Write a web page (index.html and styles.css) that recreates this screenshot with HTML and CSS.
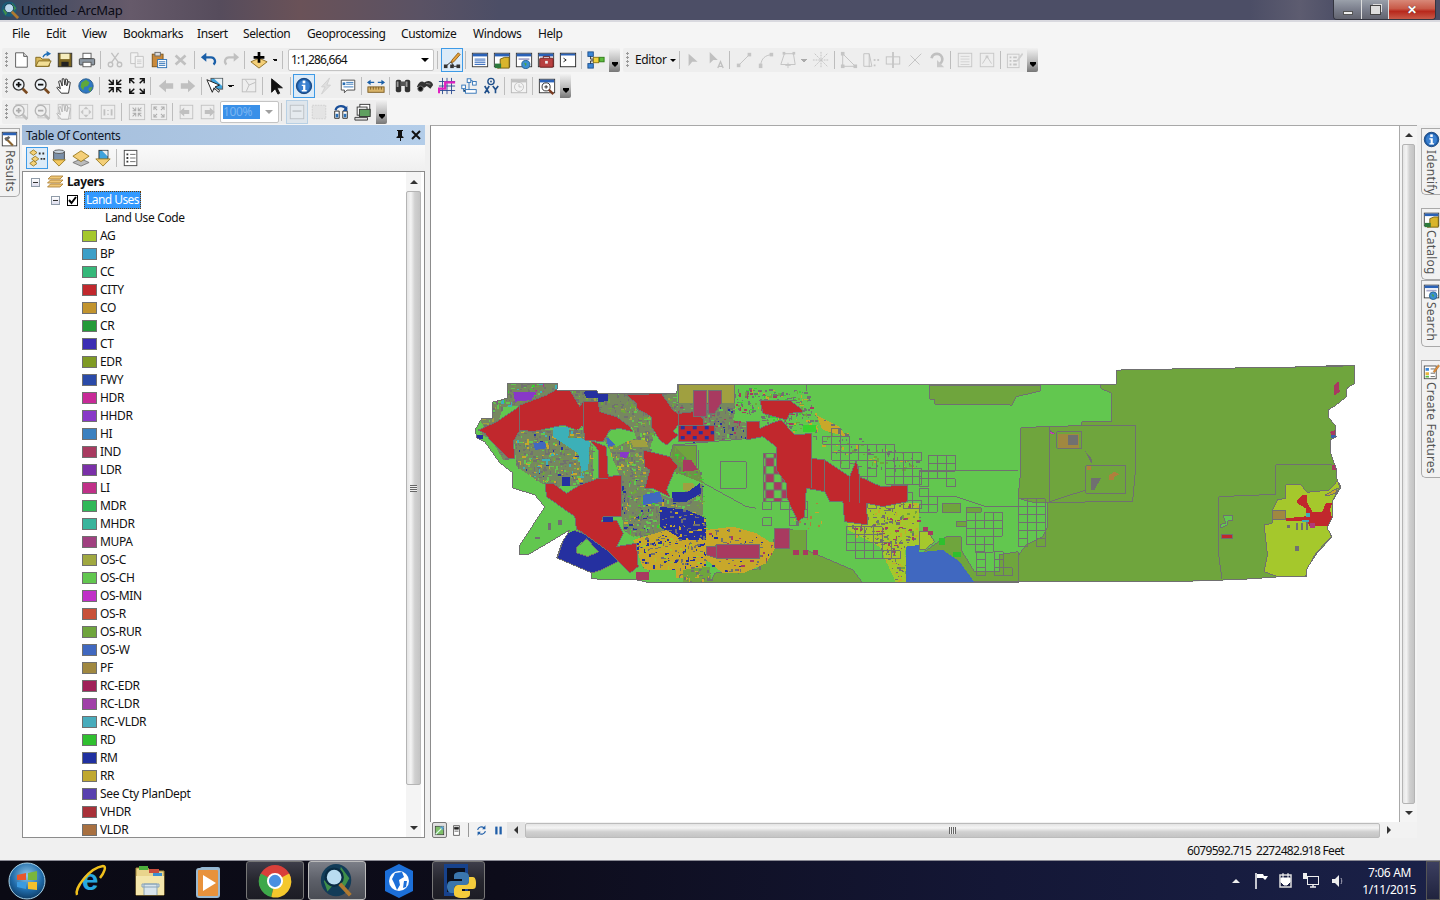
FILE: index.html
```html
<!DOCTYPE html>
<html lang="en">
<head>
<meta charset="utf-8">
<title>Untitled - ArcMap</title>
<link rel="stylesheet" href="styles.css">
</head>
<body>
<svg class="defs" width="0" height="0" aria-hidden="true">
<defs>
<symbol id="new" viewBox="0 0 20 20"><path d="M4 2h9l4 4v12H4z" fill="#fff" stroke="#555"/><path d="M13 2v4h4" fill="#ddd" stroke="#555"/></symbol>
<symbol id="open" viewBox="0 0 20 20"><path d="M2 7h5l2 2h8v8H2z" fill="#d9b95c" stroke="#7d6318"/><path d="M2 17l3-6h14l-3 6z" fill="#f3df95" stroke="#7d6318"/><path d="M10 7c1-3 3-4 6-4" fill="none" stroke="#1f6fb8" stroke-width="1.5"/><path d="M14 0l5 3-5 3z" fill="#1f6fb8"/></symbol>
<symbol id="save" viewBox="0 0 20 20"><rect x="2.500" y="2.500" width="15" height="15" fill="#7a6420" stroke="#333"/><rect x="5" y="3" width="10" height="6" fill="#f6edbe"/><rect x="6" y="12" width="8" height="5" fill="#222"/></symbol>
<symbol id="print" viewBox="0 0 20 20"><rect x="5.500" y="2.500" width="9" height="6" fill="#fff" stroke="#555"/><rect x="1.500" y="8.500" width="17" height="7" rx="1" fill="#8d98a3" stroke="#444"/><rect x="5.500" y="12.500" width="9" height="5" fill="#fff" stroke="#555"/></symbol>
<symbol id="cut" viewBox="0 0 20 20"><circle cx="5" cy="15" r="2.500" fill="none" stroke="#555" stroke-width="1.500"/><circle cx="15" cy="15" r="2.500" fill="none" stroke="#555" stroke-width="1.500"/><path d="M6 13L14 2M14 13L6 2" stroke="#555" stroke-width="1.500"/></symbol>
<symbol id="copy" viewBox="0 0 20 20"><path d="M3 2h8v12H3z" fill="#fff" stroke="#555"/><path d="M8 6h9v12H8z" fill="#fff" stroke="#555"/><path d="M10 10h5M10 12h5M10 14h5" stroke="#777"/></symbol>
<symbol id="paste" viewBox="0 0 20 20"><rect x="2.500" y="3.500" width="12" height="14" fill="#c98a3c" stroke="#7a5218"/><rect x="5.500" y="1.500" width="6" height="4" fill="#ddd" stroke="#666"/><rect x="8.500" y="9.500" width="10" height="9" fill="#fff" stroke="#2a6fb5"/><path d="M10 12h7M10 14h7M10 16h7" stroke="#2a6fb5"/></symbol>
<symbol id="del" viewBox="0 0 20 20"><path d="M4 5l11 10M15 5L4 15" stroke="#555" stroke-width="3"/></symbol>
<symbol id="undo" viewBox="0 0 20 20"><path d="M6 7h6a4.500 4.500 0 0 1 3 8" fill="none" stroke="#1a5fa8" stroke-width="2.500"/><path d="M7 2v10L1 7z" fill="#1a5fa8"/></symbol>
<symbol id="redo" viewBox="0 0 20 20"><path d="M14 7H8a4.500 4.500 0 0 0-3 8" fill="none" stroke="#1a5fa8" stroke-width="2.500"/><path d="M13 2v10l6-5z" fill="#1a5fa8"/></symbol>
<symbol id="add" viewBox="0 0 20 20"><path d="M10 8l9 4-9 7-9-7z" fill="#f4cf78" stroke="#8a6a1e"/><path d="M10 1v12M4 7h12" stroke="#000" stroke-width="3"/></symbol>
<symbol id="edit" viewBox="0 0 20 20"><path d="M3 17l6-5 3 5h6" fill="none" stroke="#222"/><rect x="1" y="15" width="4" height="4" fill="#333"/><rect x="8" y="15" width="4" height="4" fill="#333"/><rect x="15" y="15" width="4" height="4" fill="#333"/><path d="M10 10l7-8 2 2-7 8-3 1z" fill="#e8a33c" stroke="#8a5a14"/></symbol>
<symbol id="win" viewBox="0 0 20 20"><rect x="1.500" y="2.500" width="17" height="15" fill="#fff" stroke="#333"/><rect x="2" y="3" width="16" height="3" fill="#2a62b8"/></symbol>
<symbol id="wtoc" viewBox="0 0 20 20"><use href="#win"/><path d="M4 9h12M4 11h12M4 13h12M4 15h12" stroke="#2a62b8"/></symbol>
<symbol id="wcat" viewBox="0 0 20 20"><use href="#win"/><path d="M8 18V9l5-2h5v12H5z" fill="#d9b52c" stroke="#6f5a0c"/><rect x="2" y="14" width="7" height="5" fill="#2d7a3c"/></symbol>
<symbol id="wsearch" viewBox="0 0 20 20"><use href="#win"/><path d="M4 8h12v2H4z" fill="#aac"/><circle cx="12" cy="15" r="4.500" fill="#3c8fd0" stroke="#1f5e8e"/><path d="M10 13l3 1-1 3z" fill="#4ca83c"/></symbol>
<symbol id="wbox" viewBox="0 0 20 20"><use href="#win"/><rect x="3" y="8" width="15" height="10" rx="1" fill="#b84040" stroke="#6b1c1c"/><path d="M7 8V6h7v2" fill="none" stroke="#6b1c1c"/><rect x="9" y="11" width="3" height="3" fill="#eee"/></symbol>
<symbol id="wpy" viewBox="0 0 20 20"><rect x="1.500" y="2.500" width="17" height="15" fill="#fff" stroke="#222"/><rect x="2" y="3" width="16" height="2" fill="#2a62b8"/><path d="M5 8l3 2-3 2" fill="none" stroke="#111"/></symbol>
<symbol id="model" viewBox="0 0 20 20"><rect x="1" y="1" width="6" height="5" fill="#3b87d8" stroke="#1d4e8a"/><rect x="1" y="14" width="6" height="5" fill="#3b87d8" stroke="#1d4e8a"/><rect x="7" y="7" width="6" height="6" fill="#f0d23c" stroke="#8a7414"/><rect x="14" y="7" width="5" height="5" fill="#5dbb3c" stroke="#2d7a14"/><path d="M4 6v3h3M4 14v-3h3" fill="none" stroke="#222"/></symbol>
<symbol id="zin" viewBox="0 0 20 20"><circle cx="8.500" cy="8.500" r="6" fill="#eef3f8" stroke="#333" stroke-width="1.500"/><path d="M5.500 8.500h6M8.500 5.500v6" stroke="#111" stroke-width="2"/><path d="M13 13l5 5" stroke="#7a4a20" stroke-width="3"/></symbol>
<symbol id="zout" viewBox="0 0 20 20"><circle cx="8.500" cy="8.500" r="6" fill="#eef3f8" stroke="#333" stroke-width="1.500"/><path d="M5.500 8.500h6" stroke="#111" stroke-width="2"/><path d="M13 13l5 5" stroke="#7a4a20" stroke-width="3"/></symbol>
<symbol id="hand" viewBox="0 0 20 20"><path d="M7 18l-5-6 1-1 3 2-2-8 2-1 2 6V2h2l1 7 1-7 2 1-1 7 2-5 2 1-2 12z" fill="#fff" stroke="#222"/></symbol>
<symbol id="globe" viewBox="0 0 20 20"><circle cx="10" cy="10" r="8" fill="#2f78c4" stroke="#275b8a"/><path d="M5 6l5-3 4 3-2 4-4 1-1 4-3-4zM13 12l4-1-2 5-2-1z" fill="#5ea83c"/></symbol>
<symbol id="fin" viewBox="0 0 20 20"><path d="M3 3l4 4M8 3v5H3M17 3l-4 4M12 3v5h5M3 17l4-4M8 17v-5H3M17 17l-4-4M12 17v-5h5" fill="none" stroke="#111" stroke-width="1.600"/></symbol>
<symbol id="fout" viewBox="0 0 20 20"><path d="M7 7L3 3M2 7V2h5M13 7l4-4M18 7V2h-5M7 13l-4 4M2 13v5h5M13 13l4 4M18 13v5h-5" fill="none" stroke="#111" stroke-width="1.600"/></symbol>
<symbol id="back" viewBox="0 0 20 20"><path d="M2 10l8-7v4h8v6h-8v4z" fill="#555"/></symbol>
<symbol id="fwd" viewBox="0 0 20 20"><path d="M18 10l-8-7v4H2v6h8v4z" fill="#555"/></symbol>
<symbol id="selmap" viewBox="0 0 20 20"><rect x="5.500" y="1.500" width="13" height="12" fill="#3fa3dc" stroke="#555"/><path d="M9 2l9 8V2z" fill="#e8f0f4"/><path d="M1 3l6 14 2-5 5 5 1-2-5-4 5-2z" fill="#fff" stroke="#111"/></symbol>
<symbol id="clrmap" viewBox="0 0 20 20"><rect x="2.500" y="2.500" width="15" height="14" fill="#eee" stroke="#444"/><path d="M6 3l4 6-3 7M10 9l7-3" fill="none" stroke="#444"/></symbol>
<symbol id="arrow" viewBox="0 0 20 20"><path d="M4 2v15l4-4 3 6 2-1-3-6h6z" fill="#111" stroke="#111"/></symbol>
<symbol id="info" viewBox="0 0 20 20"><circle cx="10" cy="10" r="8.500" fill="#1f5ea8" stroke="#123d75"/><circle cx="10" cy="10" r="6.500" fill="#3a80d0"/><rect x="8.500" y="4" width="3" height="3" fill="#fff"/><path d="M7.500 8.500h4v6h1.500v1.500H7.500v-1.500H9V10H7.500z" fill="#fff"/></symbol>
<symbol id="bolt" viewBox="0 0 20 20"><path d="M14 1L5 11h4l-4 8 10-10h-4z" fill="#bbb" stroke="#888"/></symbol>
<symbol id="popup" viewBox="0 0 20 20"><path d="M2.500 3.500h15v11H9l-3 3v-3H2.500z" fill="#fff" stroke="#444"/><rect x="4" y="6" width="3" height="3" fill="#2a6fb5"/><path d="M8 6h8M8 8h8M5 11h11" stroke="#2a6fb5"/></symbol>
<symbol id="measure" viewBox="0 0 20 20"><rect x="1" y="11" width="18" height="6" fill="#d9b46a" stroke="#7a5a20"/><path d="M4 11v3M7 11v3M10 11v3M13 11v3M16 11v3" stroke="#7a5a20"/><path d="M1 6h7M19 6h-7" stroke="#1a5fa8" stroke-width="1.500"/><path d="M4 3v6L0 6zM16 3v6l4-3z" fill="#1a5fa8"/></symbol>
<symbol id="find" viewBox="0 0 20 20"><rect x="2" y="3" width="6" height="14" rx="2" fill="#333"/><rect x="12" y="3" width="6" height="14" rx="2" fill="#333"/><rect x="7" y="5" width="6" height="5" fill="#555"/><path d="M3 5h2v6H3zM13 5h2v6h-2z" fill="#999"/></symbol>
<symbol id="route" viewBox="0 0 20 20"><path d="M1 11c2-6 6-7 8-5 4-3 9-2 10 3l-3 4-4-3-3 2-4-1z" fill="#333"/><circle cx="5" cy="13" r="3" fill="#111" stroke="#777"/><path d="M11 7l5 1" stroke="#888"/></symbol>
<symbol id="mgrid" viewBox="0 0 20 20"><path d="M5 1v18M10 1v18M15 1v18M1 5h18M1 10h18M1 15h18" stroke="#2a4a90"/><path d="M1 18v-5h7V6h11" fill="none" stroke="#e020c0" stroke-width="2.500"/></symbol>
<symbol id="flow" viewBox="0 0 20 20"><rect x="8" y="2" width="4" height="4" fill="#fff" stroke="#2a6fb5"/><rect x="14" y="5" width="4" height="4" fill="#fff" stroke="#2a6fb5"/><rect x="2" y="9" width="4" height="4" fill="#fff" stroke="#2a6fb5"/><rect x="6" y="14" width="12" height="4" fill="#fff" stroke="#2a6fb5"/><path d="M10 6v8M4 13v3h2M12 4h2" stroke="#2a6fb5"/></symbol>
<symbol id="xy" viewBox="0 0 20 20"><circle cx="10" cy="5" r="3.500" fill="none" stroke="#1f4f8a" stroke-width="1.500"/><circle cx="10" cy="5" r="1" fill="#1f4f8a"/><path d="M3 10l5 8M8 10l-5 8M12 10l3 4 3-4M15 14v4" fill="none" stroke="#1f4f8a" stroke-width="1.800"/></symbol>
<symbol id="clock" viewBox="0 0 20 20"><use href="#win"/><circle cx="10" cy="11" r="5" fill="#fff" stroke="#555"/><path d="M10 8v3h3" fill="none" stroke="#555"/></symbol>
<symbol id="wzoom" viewBox="0 0 20 20"><use href="#win"/><circle cx="9" cy="11" r="4.500" fill="#fff" stroke="#222"/><path d="M7 11h4M9 9v4" stroke="#222"/><path d="M12 14l5 5" stroke="#7a3a20" stroke-width="2.500"/></symbol>
<symbol id="pan" viewBox="0 0 20 20"><rect x="2.500" y="2.500" width="15" height="15" fill="#eee" stroke="#555"/><path d="M10 4l3 3H7zM10 16l3-3H7zM4 10l3-3v6zM16 10l-3-3v6z" fill="#666"/></symbol>
<symbol id="one" viewBox="0 0 20 20"><rect x="2.500" y="2.500" width="15" height="15" fill="#eee" stroke="#555"/><path d="M6 7v7M14 7v7M10 8v1M10 12v1" stroke="#555" stroke-width="2"/></symbol>
<symbol id="pgfin" viewBox="0 0 20 20"><rect x="1.500" y="1.500" width="17" height="17" fill="#eee" stroke="#555"/><use href="#fin" x="3" y="3" width="14" height="14"/></symbol>
<symbol id="pgfout" viewBox="0 0 20 20"><rect x="1.500" y="1.500" width="17" height="17" fill="#eee" stroke="#555"/><use href="#fout" x="3" y="3" width="14" height="14"/></symbol>
<symbol id="pgback" viewBox="0 0 20 20"><rect x="3.500" y="2.500" width="14" height="15" fill="#eee" stroke="#555"/><use href="#back" x="1" y="3" width="14" height="14"/></symbol>
<symbol id="pgfwd" viewBox="0 0 20 20"><rect x="2.500" y="2.500" width="14" height="15" fill="#eee" stroke="#555"/><use href="#fwd" x="5" y="3" width="14" height="14"/></symbol>
<symbol id="pgzin" viewBox="0 0 20 20"><rect x="5.500" y="1.500" width="13" height="15" fill="#eee" stroke="#666"/><use href="#zin"/></symbol>
<symbol id="pgzout" viewBox="0 0 20 20"><rect x="5.500" y="1.500" width="13" height="15" fill="#eee" stroke="#666"/><use href="#zout"/></symbol>
<symbol id="pghand" viewBox="0 0 20 20"><rect x="3.500" y="1.500" width="14" height="16" fill="#eee" stroke="#666"/><use href="#hand"/></symbol>
<symbol id="toggle" viewBox="0 0 20 20"><rect x="2.500" y="2.500" width="15" height="15" fill="#f4f4f4" stroke="#666"/><rect x="5" y="8" width="10" height="2" fill="#888"/></symbol>
<symbol id="focus" viewBox="0 0 20 20"><rect x="2.500" y="2.500" width="15" height="15" fill="#ccc" stroke="#888" stroke-dasharray="2 1"/></symbol>
<symbol id="chg" viewBox="0 0 20 20"><path d="M3 17V9h5v8zM12 17V9h5v8z" fill="#fff" stroke="#222"/><rect x="4" y="12" width="3" height="4" fill="#2a6fb5"/><rect x="13" y="12" width="3" height="4" fill="#2a6fb5"/><path d="M4 8c1-6 10-6 12-1" fill="none" stroke="#1a4f98" stroke-width="2.500"/><path d="M17 3v6h-5z" fill="#1a4f98"/></symbol>
<symbol id="frames" viewBox="0 0 20 20"><rect x="6.500" y="1.500" width="11" height="9" fill="#fff" stroke="#333"/><rect x="3.500" y="4.500" width="11" height="9" fill="#fff" stroke="#333"/><rect x="6" y="7" width="12" height="8" fill="#5fa060" stroke="#333"/><path d="M1 16h14v3H1z" fill="#ddd" stroke="#333"/></symbol>
<symbol id="evert" viewBox="0 0 20 20"><path d="M4 3v14l4-5h6z" fill="#555"/></symbol>
<symbol id="eanno" viewBox="0 0 20 20"><path d="M3 1v13l4-4h5z" fill="#555"/><path d="M12 19l3-7 3 7M13 17h4" fill="none" stroke="#555" stroke-width="1.500"/></symbol>
<symbol id="eline" viewBox="0 0 20 20"><path d="M4 16L16 4" stroke="#555"/><rect x="2" y="14" width="4" height="4" fill="#666"/><rect x="14" y="2" width="4" height="4" fill="#666"/></symbol>
<symbol id="ecurve" viewBox="0 0 20 20"><path d="M4 16C5 8 9 5 16 4" fill="none" stroke="#555"/><rect x="2" y="14" width="4" height="5" fill="#666"/><rect x="14" y="2" width="4" height="4" fill="#666"/></symbol>
<symbol id="epoly" viewBox="0 0 20 20"><path d="M6 3h10l2 12H2z" fill="none" stroke="#555"/><rect x="4" y="1" width="3" height="3" fill="#666"/><rect x="15" y="1" width="3" height="3" fill="#666"/><path d="M10 13v6M7 16h6" stroke="#666"/></symbol>
<symbol id="escatter" viewBox="0 0 20 20"><path d="M10 1v18M1 10h18M3 3l14 14M17 3L3 17" stroke="#555" stroke-dasharray="2 1"/></symbol>
<symbol id="etri" viewBox="0 0 20 20"><path d="M3 3v14h14z" fill="none" stroke="#555"/><rect x="1" y="1" width="4" height="4" fill="#666"/><rect x="1" y="15" width="4" height="4" fill="#666"/><rect x="15" y="15" width="4" height="4" fill="#666"/></symbol>
<symbol id="esplit" viewBox="0 0 20 20"><path d="M2 3h6l3 14H2zM8 3v15" fill="none" stroke="#555"/><rect x="13" y="9" width="2" height="2" fill="#666"/><rect x="17" y="9" width="2" height="2" fill="#666"/><rect x="13" y="15" width="2" height="2" fill="#666"/></symbol>
<symbol id="ebox" viewBox="0 0 20 20"><rect x="2.500" y="6.500" width="15" height="8" fill="#eee" stroke="#555"/><path d="M10 1v18" stroke="#666" stroke-width="2"/></symbol>
<symbol id="ecross" viewBox="0 0 20 20"><path d="M3 17L17 3M5 5l10 10" stroke="#555"/></symbol>
<symbol id="erot" viewBox="0 0 20 20"><path d="M4 8a6 6 0 1 1 7 7" fill="none" stroke="#555" stroke-width="3"/><path d="M10 10v8h8z" fill="#777"/></symbol>
<symbol id="etable" viewBox="0 0 20 20"><rect x="2.500" y="2.500" width="15" height="15" fill="#eee" stroke="#666"/><path d="M5 6h10M5 9h10M5 12h10M5 15h10" stroke="#888"/></symbol>
<symbol id="esketch" viewBox="0 0 20 20"><rect x="2.500" y="2.500" width="15" height="15" fill="#eee" stroke="#666"/><path d="M5 14l5-8 5 8" fill="none" stroke="#666"/><rect x="8.500" y="5" width="3" height="3" fill="#777"/></symbol>
<symbol id="eattr" viewBox="0 0 20 20"><rect x="1.500" y="3.500" width="13" height="15" fill="#eee" stroke="#666"/><path d="M4 7h2M8 7h4M4 11h2M8 11h4M4 15h2M8 15h4" stroke="#666" stroke-width="2"/><path d="M12 10l6-8 1 2-6 8z" fill="#888"/></symbol>
<symbol id="byorder" viewBox="0 0 20 20"><path d="M6 1l4 3-4 3-4-3z" fill="#f4d27a" stroke="#9a7a20"/><path d="M8 8l4 3-4 3-4-3z" fill="#f4d27a" stroke="#9a7a20"/><path d="M6 13l4 3-4 3-4-3z" fill="#f4d27a" stroke="#9a7a20"/><path d="M12 4h2v2h-2zM16 4h2v2h-2zM14 10h2v2h-2zM17 10h2v2h-2z" fill="#333"/></symbol>
<symbol id="bysrc" viewBox="0 0 20 20"><path d="M4 2h12v11H4z" fill="#7a8fa8"/><ellipse cx="10" cy="3" rx="6" ry="2" fill="#c8d4e0" stroke="#555"/><path d="M4 3v9M16 3v9" stroke="#444"/><path d="M3 12h14l-7 7z" fill="#f4c860" stroke="#9a7a20"/></symbol>
<symbol id="byvis" viewBox="0 0 20 20"><path d="M10 11l9 4-9 4-9-4z" fill="#bbb" stroke="#777"/><path d="M10 2l9 6-9 6-9-6z" fill="#f4cf78" stroke="#9a7a20"/></symbol>
<symbol id="bysel" viewBox="0 0 20 20"><rect x="5.500" y="1.500" width="10" height="10" fill="#3fa3dc" stroke="#333"/><path d="M9 2l6 6V2z" fill="#eee"/><path d="M2 11h16l-8 8z" fill="#f4cf78" stroke="#9a7a20"/></symbol>
<symbol id="opts" viewBox="0 0 20 20"><rect x="2.500" y="1.500" width="14" height="17" fill="#fff" stroke="#444"/><path d="M5 5h2v2H5zM5 9h2v2H5zM5 13h2v2H5z" fill="#333"/><path d="M9 6h6M9 10h6M9 14h6" stroke="#666"/></symbol>
<symbol id="mdata" viewBox="0 0 20 20"><rect x="3.500" y="3.500" width="13" height="13" fill="#7fbf6a" stroke="#333"/><path d="M4 16L16 4" stroke="#dfe" stroke-width="2"/><path d="M10 4h6v6z" fill="#5aa0d8"/></symbol>
<symbol id="mlayout" viewBox="0 0 20 20"><path d="M5.500 2.500h9v15h-9z" fill="#fff" stroke="#222"/><path d="M7 5h6v3H7zM7 11h6" fill="#222" stroke="#222"/></symbol>
<symbol id="refresh" viewBox="0 0 20 20"><path d="M4 9a6 6 0 0 1 10-3M16 11a6 6 0 0 1-10 3" fill="none" stroke="#1f5ea8" stroke-width="1.800"/><path d="M16 2v6h-5zM4 18v-6h5z" fill="#1f5ea8"/></symbol>
<symbol id="pause" viewBox="0 0 20 20"><rect x="5" y="4" width="3.500" height="12" fill="#1f5ea8"/><rect x="11.500" y="4" width="3.500" height="12" fill="#1f5ea8"/></symbol>
<symbol id="resultsi" viewBox="0 0 20 20"><rect x="1.500" y="1.500" width="17" height="16" fill="#fff" stroke="#333"/><rect x="2" y="2" width="16" height="3" fill="#2a62b8"/><path d="M5 8l9 9" stroke="#8a6430" stroke-width="2.500"/><path d="M4 9l5-3 2 2-5 4z" fill="#666"/></symbol>
<symbol id="createf" viewBox="0 0 20 20"><rect x="1.500" y="3.500" width="14" height="15" fill="#fff" stroke="#444"/><path d="M3 6h4v3H3z" fill="#3b87d8"/><path d="M3 11h4v3H3z" fill="#e8b53c"/><path d="M3 15h4v2H3z" fill="#5dbb3c"/><path d="M9 7h5M9 12h5M9 16h5" stroke="#555"/><path d="M12 10l6-8 1.500 1.500-6 8z" fill="#e88f3c" stroke="#8a5a14" stroke-width=".5"/></symbol>
<pattern id="chk" width="48" height="48" patternUnits="userSpaceOnUse"><rect width="48" height="48" fill="#62c74f"/><rect x="0" y="0" width="24" height="24" fill="#a83a60"/><rect x="24" y="24" width="24" height="24" fill="#a83a60"/><path d="M0 0h48M0 24h48M0 0v48M24 0v48" stroke="#707070" stroke-width="3"/></pattern>
<pattern id="bchk" width="36" height="30" patternUnits="userSpaceOnUse"><rect width="36" height="30" fill="#c1282d"/><rect x="3" y="3" width="12" height="10" fill="#2530a0"/><rect x="21" y="18" width="12" height="10" fill="#2530a0"/></pattern>
<clipPath id="county"><path d="M508 383L558 383 557 390 597 390 598 393 677 393 678 384 853 384 1117 384 1117 370 1167 369 1292 367 1355 365 1356 383 1348 388 1347 397 1337 405 1329 410 1329 417 1336 425 1337 437 1331 440 1332 455 1337 468 1338 480 1342 487 1333 502 1333 518 1328 528 1333 537 1318 553 1308 568 1307 577 1278 577 1250 579 1203 581 1133 582 1033 582 920 583 650 583 637 580 592 579 592 573 557 558 562 543 570 530 528 555 520 555 520 545 545 507 535 495 513 488 513 473 500 463 485 442 477 438 475 430 482 418 493 418 493 402 508 398z"/></clipPath>
</defs>
</svg>

<div class="app">
  <header class="titlebar">
    <svg class="ticon" width="18" height="18" viewBox="0 0 20 20"><circle cx="9" cy="9" r="8.500" fill="#1c5c78"/><path d="M12 2l5 6-3 3zM2 10l3-2 2 5-2 3z" fill="#3f8f4a"/><circle cx="9" cy="8" r="5" fill="#bcd8ec" stroke="#0f3a50"/><path d="M12 12l7 7" stroke="#b07a30" stroke-width="3"/></svg>
    <span class="ttext">Untitled - ArcMap</span>
    <div class="wctl">
      <span class="wbtn wmin"><i class="gmin"></i></span>
      <span class="wbtn wmax"><i class="gmax"></i></span>
      <span class="wbtn wclose"><span class="gx">✕</span></span>
    </div>
  </header>

  <nav class="menubar">
    <span class="m m-file">File</span><span class="m m-edit">Edit</span><span class="m m-view">View</span><span class="m m-book">Bookmarks</span><span class="m m-ins">Insert</span><span class="m m-sel">Selection</span><span class="m m-geo">Geoprocessing</span><span class="m m-cus">Customize</span><span class="m m-win">Windows</span><span class="m">Help</span>
  </nav>

  <section class="bars">
    <div class="barrow">
      <div class="tb tb-std">
        <span class="grip"></span>
        <span class="b"><svg><use href="#new"/></svg></span><span class="b"><svg><use href="#open"/></svg></span><span class="b"><svg><use href="#save"/></svg></span><span class="b"><svg><use href="#print"/></svg></span><span class="sep"></span>
        <span class="b off"><svg><use href="#cut"/></svg></span><span class="b off"><svg><use href="#copy"/></svg></span><span class="b"><svg><use href="#paste"/></svg></span><span class="b off"><svg><use href="#del"/></svg></span><span class="sep"></span>
        <span class="b"><svg><use href="#undo"/></svg></span><span class="b off"><svg><use href="#redo"/></svg></span><span class="sep"></span>
        <span class="b"><svg><use href="#add"/></svg></span><span class="drop"></span><span class="sep"></span>
        <span class="combo"><span class="scale">1:1,286,664</span><i class="carr"></i></span><span class="sep sep-c"></span>
        <span class="b on"><svg><use href="#edit"/></svg></span><span class="sep"></span>
        <span class="b"><svg><use href="#wtoc"/></svg></span><span class="b"><svg><use href="#wcat"/></svg></span><span class="b"><svg><use href="#wsearch"/></svg></span><span class="b"><svg><use href="#wbox"/></svg></span><span class="b"><svg><use href="#wpy"/></svg></span><span class="sep"></span>
        <span class="b"><svg><use href="#model"/></svg></span>
        <span class="more"></span>
      </div>
      <div class="tb tb-edit">
        <span class="grip"></span>
        <span class="editor">Editor<i class="mini"></i></span><span class="sep"></span>
        <span class="b off"><svg><use href="#evert"/></svg></span><span class="b off"><svg><use href="#eanno"/></svg></span><span class="sep"></span>
        <span class="b off"><svg><use href="#eline"/></svg></span><span class="b off"><svg><use href="#ecurve"/></svg></span><span class="b off"><svg><use href="#epoly"/></svg></span><span class="drop off-d"></span><span class="b off"><svg><use href="#escatter"/></svg></span><span class="sep"></span>
        <span class="b off"><svg><use href="#etri"/></svg></span><span class="b off"><svg><use href="#esplit"/></svg></span><span class="b off"><svg><use href="#ebox"/></svg></span><span class="b off"><svg><use href="#ecross"/></svg></span><span class="b off"><svg><use href="#erot"/></svg></span><span class="sep"></span>
        <span class="b off"><svg><use href="#etable"/></svg></span><span class="b off"><svg><use href="#esketch"/></svg></span><span class="sep"></span>
        <span class="b off"><svg><use href="#eattr"/></svg></span>
        <span class="more"></span>
      </div>
    </div>
    <div class="barrow">
      <div class="tb tb-tools">
        <span class="grip grip-n"></span>
        <span class="b"><svg><use href="#zin"/></svg></span><span class="b"><svg><use href="#zout"/></svg></span><span class="b"><svg><use href="#hand"/></svg></span><span class="b"><svg><use href="#globe"/></svg></span><span class="sep sep-w"></span>
        <span class="b"><svg><use href="#fin"/></svg></span><span class="b"><svg><use href="#fout"/></svg></span><span class="sep sep-w"></span>
        <span class="b off"><svg><use href="#back"/></svg></span><span class="b off"><svg><use href="#fwd"/></svg></span><span class="sep sep-n"></span>
        <span class="b"><svg><use href="#selmap"/></svg></span><span class="drop drop-w"></span><span class="b off"><svg><use href="#clrmap"/></svg></span><span class="sep"></span>
        <span class="b"><svg><use href="#arrow"/></svg></span><span class="sep sep-n"></span>
        <span class="b on"><svg><use href="#info"/></svg></span><span class="b off"><svg><use href="#bolt"/></svg></span><span class="b"><svg><use href="#popup"/></svg></span><span class="sep"></span>
        <span class="b"><svg><use href="#measure"/></svg></span><span class="sep sep-n"></span>
        <span class="b"><svg><use href="#find"/></svg></span><span class="b"><svg><use href="#route"/></svg></span><span class="b"><svg><use href="#mgrid"/></svg></span><span class="b"><svg><use href="#flow"/></svg></span><span class="b"><svg><use href="#xy"/></svg></span><span class="sep"></span>
        <span class="b off"><svg><use href="#clock"/></svg></span><span class="sep"></span>
        <span class="b"><svg><use href="#wzoom"/></svg></span>
        <span class="more"></span>
      </div>
    </div>
    <div class="barrow">
      <div class="tb tb-page">
        <span class="grip grip-n"></span>
        <span class="b off"><svg><use href="#pgzin"/></svg></span><span class="b off"><svg><use href="#pgzout"/></svg></span><span class="b off"><svg><use href="#pghand"/></svg></span><span class="b off"><svg><use href="#pan"/></svg></span><span class="b off"><svg><use href="#one"/></svg></span><span class="sep sep-w"></span>
        <span class="b off"><svg><use href="#pgfin"/></svg></span><span class="b off"><svg><use href="#pgfout"/></svg></span><span class="sep sep-n"></span>
        <span class="b off"><svg><use href="#pgback"/></svg></span><span class="b off"><svg><use href="#pgfwd"/></svg></span>
        <span class="combo combo-z"><span class="zval">100%</span><i class="carr carr-off"></i></span><span class="sep sep-w"></span>
        <span class="b on on-off off"><svg><use href="#toggle"/></svg></span><span class="b off"><svg><use href="#focus"/></svg></span><span class="b"><svg><use href="#chg"/></svg></span><span class="b"><svg><use href="#frames"/></svg></span>
        <span class="more"></span>
      </div>
    </div>
  </section>

  <main class="work">
    <aside class="rail-l">
      <div class="vtab vtab-l"><svg class="vic"><use href="#resultsi"/></svg><span class="vtext">Results</span></div>
    </aside>

    <section class="toc">
      <div class="toc-head"><span class="toc-title">Table Of Contents</span>
        <svg class="pin" width="10" height="11" viewBox="0 0 10 11"><path d="M3 0h5v1H7v5l1.500 1v1H6v3H5V8H1.500V7L3 6V1H2V0z" fill="#111"/></svg>
        <svg class="close" width="10" height="10" viewBox="0 0 10 10"><path d="M1 1l8 8M9 1L1 9" stroke="#111" stroke-width="2"/></svg>
      </div>
      <div class="toc-tools">
        <span class="b on"><svg><use href="#byorder"/></svg></span><span class="b"><svg><use href="#bysrc"/></svg></span><span class="b"><svg><use href="#byvis"/></svg></span><span class="b"><svg><use href="#bysel"/></svg></span><span class="sep"></span><span class="b"><svg><use href="#opts"/></svg></span>
      </div>
      <div class="tree-box">
        <div class="tree">
          <div class="row row-top"><i class="exp"></i><svg class="lyr" width="17" height="14" viewBox="0 0 17 14"><path d="M4 1h12l-3 3H1zM3.500 5H16l-3 3H.5zM3.500 9H16l-3 3H.5z" fill="#f0c878" stroke="#a67a30" stroke-width=".8"/></svg><b class="lname">Layers</b></div>
          <div class="row row-sub"><i class="exp"></i><span class="chk"><svg width="11" height="11" viewBox="0 0 11 11"><path d="M2 5l2.500 3L9 2" fill="none" stroke="#000" stroke-width="2"/></svg></span><span class="sel">Land Uses</span></div>
          <div class="row row-field">Land Use Code</div>
          <div class="row"><i class="sw c01"></i>AG</div>
          <div class="row"><i class="sw c02"></i>BP</div>
          <div class="row"><i class="sw c03"></i>CC</div>
          <div class="row"><i class="sw c04"></i>CITY</div>
          <div class="row"><i class="sw c05"></i>CO</div>
          <div class="row"><i class="sw c06"></i>CR</div>
          <div class="row"><i class="sw c07"></i>CT</div>
          <div class="row"><i class="sw c08"></i>EDR</div>
          <div class="row"><i class="sw c09"></i>FWY</div>
          <div class="row"><i class="sw c10"></i>HDR</div>
          <div class="row"><i class="sw c11"></i>HHDR</div>
          <div class="row"><i class="sw c12"></i>HI</div>
          <div class="row"><i class="sw c13"></i>IND</div>
          <div class="row"><i class="sw c14"></i>LDR</div>
          <div class="row"><i class="sw c15"></i>LI</div>
          <div class="row"><i class="sw c16"></i>MDR</div>
          <div class="row"><i class="sw c17"></i>MHDR</div>
          <div class="row"><i class="sw c18"></i>MUPA</div>
          <div class="row"><i class="sw c19"></i>OS-C</div>
          <div class="row"><i class="sw c20"></i>OS-CH</div>
          <div class="row"><i class="sw c21"></i>OS-MIN</div>
          <div class="row"><i class="sw c22"></i>OS-R</div>
          <div class="row"><i class="sw c23"></i>OS-RUR</div>
          <div class="row"><i class="sw c24"></i>OS-W</div>
          <div class="row"><i class="sw c25"></i>PF</div>
          <div class="row"><i class="sw c26"></i>RC-EDR</div>
          <div class="row"><i class="sw c27"></i>RC-LDR</div>
          <div class="row"><i class="sw c28"></i>RC-VLDR</div>
          <div class="row"><i class="sw c29"></i>RD</div>
          <div class="row"><i class="sw c30"></i>RM</div>
          <div class="row"><i class="sw c31"></i>RR</div>
          <div class="row"><i class="sw c32"></i>See Cty PlanDept</div>
          <div class="row"><i class="sw c33"></i>VHDR</div>
          <div class="row"><i class="sw c34"></i>VLDR</div>
        </div>
        <div class="vscroll vscroll-t">
          <span class="sarrow up"></span>
          <span class="thumb"><i class="hatch"></i></span>
          <span class="sarrow down"></span>
        </div>
      </div>
    </section>

    <section class="view">
      <div class="view-top">
        <svg class="map" viewBox="431 126 969 696" shape-rendering="crispEdges">
          <g clip-path="url(#county)">
            <rect x="431" y="340" width="969" height="260" fill="#62c74f"/>
            <g transform="translate(920 355) scale(.33333)" stroke="#707070" stroke-width="3">
              <path fill="#6fa53d" d="M590 88V45L740 42 1115 36 1400 30V700H-1V685L298 680V600L320 570 370 545 383 520V442L340 442 296 430 304 345V218L390 214 488 212V200L578 200V115L545 100V88z"/>
              <path fill="#6fa53d" d="M31 90H362V108L290 125 278 150 218 148 46 148V132H31z"/>
              <path fill="none" d="M296 345H0M304 218V345M390 214V440M650 212V330L640 440 383 442M488 212H650M412 230H488V280H412zM524 332H620V415H500V332zM385 442L500 405M898 425V595L908 672M898 425L1070 418V330L1240 328"/>
              <path fill="#6fa53d" d="M68 445H124V472H68zM140 458H186V472H140zM110 500H140V515H110zM80 545H125V585L165 650 240 650V600L296 590V680H0V600z"/>
              <path fill="none" d="M0 425H110L200 455H296"/>
              <path fill="#4068c0" stroke="none" d="M0 592L70 585 120 620 165 682H0z"/>
              <path fill="#a5c82c" d="M0 530H25L45 560 15 585H0z"/>
              <rect x="58" y="548" width="20" height="22" fill="#2ec02e" stroke="none"/>
              <rect x="102" y="592" width="22" height="15" fill="#2ec02e" stroke="none"/>
              <rect x="416" y="238" width="64" height="40" fill="#a08840" stroke="none"/>
              <path fill="#707070" stroke="none" d="M445 240h30v30h-30zM388 222l20 14-12 2zM495 285l25 30-4 10zM515 370h30l-20 35h-10z"/>
              <path fill="#b07f3c" stroke="none" d="M570 360l15-10 15 8-15 8-1 8h-14zM502 332h14v12h-14z"/>
              <path fill="#d030c0" stroke="none" d="M392 230l14 6-10 2z"/>
              <path fill="#a5c82c" d="M1100 390H1145L1165 412 1230 405 1255 378 1262 395 1240 440 1240 490 1228 520 1236 545 1190 595 1165 640 1160 665 1075 665 1060 660 1035 650 1045 600 1035 510 1060 505V465L1075 435 1100 430z"/>
              <path fill="#c1282d" stroke="none" d="M1135 435L1150 420H1165V445L1180 470H1210L1220 445H1240L1232 465 1240 490 1228 512H1170L1165 498H1100V490L1160 484 1160 460 1135 445z"/>
              <rect x="1060" y="466" width="40" height="28" fill="#a08840"/>
              <path fill="#b03a78" stroke="none" d="M1172 505h16v14h-16z"/>
              <path fill="#707070" stroke="none" d="M1105 510h8v8h-8zM1130 505h7v20h-7zM1145 505h6v20h-6zM1160 500h6v25h-6zM1128 572h12v16h-12z"/>
              <path fill="#3cb0b8" stroke="none" d="M1150 495h20v5h-20zM1160 475h12v10h-12z"/>
              <path fill="#c8a82a" d="M1218 420L1255 400 1250 415 1225 422z"/>
              <path fill="#a83a60" stroke="none" d="M1245 90L1258 78 1262 110 1245 122zM1233 230l15-5 6 16-16 5zM1238 330h14v16h-14z"/>
              <path fill="#3c60b0" stroke="none" d="M1235 240l16 0-2 10-14-2z"/>
              <path fill="#62c74f" d="M912 482H940V498L925 498V510L905 520 903 508 920 506z"/>
              <rect x="908" y="538" width="32" height="12" fill="#c1282d"/>
              <path fill="#a83a60" stroke="none" d="M10 515h15v12H10zM25 528h15v12H25z"/>
            </g>
            <g transform="translate(470 370) scale(.33333)" stroke="#707070" stroke-width="3">
              <path fill="#a0a040" d="M625 43H795V100H625z"/>
              <path fill="#6fa53d" d="M920 480H1010V540L1150 600 1180 640H720L735 610 800 600 860 600 900 560z"/>
              <path fill="#6fa53d" d="M610 225H680V300L620 310 600 260z"/>
              <path fill="none" d="M685 240V330L830 410 860 415M752 275H830V355H752zM610 225L840 205M1010 43V120"/>
              <g id="noise" stroke="none"></g>
              <g id="cells" fill="none"></g>
              <rect x="882" y="250" width="96" height="144" fill="url(#chk)"/>
              <path fill="url(#bchk)" d="M625 165H735V215H625z"/>
              <path fill="#c1282d" d="M625 130L670 125 700 145 700 165 625 165z"/>
              <path fill="#a83a60" d="M670 60H710V140H670zM715 60H755V100L735 130H715z"/>
              <path fill="#a83a60" d="M740 525H870V565H740zM915 475H960V535H915zM710 530H740V565L710 555z"/>
              <path fill="#a83a60" stroke="none" d="M970 540h18v14h-18zM1000 540h15v14h-15zM1030 540h15v14h-15zM640 270l25 0 20 30-45 5z"/>
              <path fill="#3cb0b8" stroke="none" d="M250 170L300 170 295 205H335L360 215 355 300 335 305 325 250 310 240 280 220 250 200z"/>
              <path fill="#4068c0" stroke="none" d="M190 220L225 215 230 235 195 240zM410 205L440 200 435 225 415 230zM520 375L570 365 580 395 520 405z"/>
              <path fill="#62c74f" stroke="none" d="M410 195L435 170 490 175 500 205 470 215 440 230z"/>
              <path fill="#a0a040" stroke="none" d="M480 210L525 210 535 230 490 230zM640 340h30l10 25-40-5z"/>
              <path fill="#8838c8" stroke="none" d="M130 65H200L185 90 135 95zM450 245h30l-10 20-20-5z"/>
              <path fill="#2530a0" stroke="none" d="M340 65L385 60 385 85 350 85zM385 72h30v20l-30 5zM545 150L580 150 600 180 555 178zM275 320h25v28h-25zM605 365H655L690 340 695 370 650 395H610z"/>
              <path fill="#37d22e" stroke="none" d="M1000 165L1040 165 1040 185 1000 185zM900 130H925V145H900z"/>
              <path fill="#c1282d" d="M80 155L140 115 150 105 230 75 265 55 300 60 330 110 340 95 385 95 390 125 440 140 480 170 490 185 450 175 420 180 400 215 345 210 340 165 320 180 280 165 190 185 150 180 130 215 135 265 115 265 60 210 45 190 25 180z"/>
              <path fill="#c1282d" d="M360 210L410 230 415 320 455 315 455 440 400 440 395 455 440 450 460 490 440 530 500 520 505 590 480 610 410 540 340 490 320 480 315 440 230 380 225 340 250 340 290 370 330 345 385 325 385 240z"/>
              <path fill="#c1282d" d="M520 240L600 260 625 290 615 300 590 360 600 380 550 355 525 355 540 300 525 290z"/>
              <path fill="#c1282d" d="M470 75L575 70 610 120 625 130 625 165 610 185 625 195 590 225 570 210 545 170 545 140 500 115 500 100z"/>
              <path fill="#c1282d" d="M870 90H960L1005 125 960 130 950 150 880 130z"/>
              <path fill="#c1282d" d="M830 155H870V175L905 160 935 150 975 195 1025 190 1025 265 1065 270 1140 320 1160 270 1170 320 1235 350 1315 345 1315 395 1240 410 1190 400 1195 465 1125 455 1120 395 1080 395 1065 365 1010 355 1005 440 985 455 950 380 950 340 920 300 920 230 880 200 830 210z"/>
              <path fill="none" d="M150 105V180M340 95V165M385 325H415M385 240V325M1025 265V355M1065 270V365M1140 320V395M1170 320V400"/>
              <path fill="#2530a0" d="M300 478L340 490 410 540 445 575 395 600 365 610 262 565 280 510z"/>
              <path fill="#62c74f" d="M320 530L350 505 385 545 350 560 320 550z"/>
              <path fill="#2530a0" stroke="none" d="M400 440h30v15h-30zM20 195h18v12H20z"/>
              <path fill="#62c74f" stroke="none" d="M540 600H620V640H540zM175 545L230 440 300 440 315 480 260 510 175 555z"/>
              <path fill="#707070" stroke="none" d="M235 460h8v20h-8zM265 450h10v15h-10zM195 500h15v6h-15z"/>
              <path fill="#a83a60" stroke="none" d="M500 605h38v25h-38z"/>
            </g>
          </g>
          <path fill="none" stroke="#707070" d="M508 383L558 383 557 390 597 390 598 393 677 393 678 384 853 384 1117 384 1117 370 1167 369 1292 367 1355 365 1356 383 1348 388 1347 397 1337 405 1329 410 1329 417 1336 425 1337 437 1331 440 1332 455 1337 468 1338 480 1342 487 1333 502 1333 518 1328 528 1333 537 1318 553 1308 568 1307 577 1278 577 1250 579 1203 581 1133 582 1033 582 920 583 650 583 637 580 592 579 592 573 557 558 562 543 570 530 528 555 520 555 520 545 545 507 535 495 513 488 513 473 500 463 485 442 477 438 475 430 482 418 493 418 493 402 508 398z"/>
        </svg>
        <div class="vscroll vscroll-m">
          <span class="sarrow up"></span>
          <span class="thumb"></span>
          <span class="sarrow down"></span>
        </div>
      </div>
      <div class="view-bot">
        <span class="vb vb-on"><svg><use href="#mdata"/></svg></span><span class="vb"><svg><use href="#mlayout"/></svg></span><span class="vsep"></span>
        <span class="vb vb-r"><svg><use href="#refresh"/></svg></span><span class="vb vb-p"><svg><use href="#pause"/></svg></span>
        <span class="harrow left"></span>
        <span class="hthumb"><i class="hgrip"></i></span>
        <span class="harrow right"></span>
      </div>
    </section>

    <aside class="rail-r">
      <div class="vtab vtab-r t-id"><svg class="vic"><use href="#info"/></svg><span class="vtext">Identify</span></div>
      <div class="vtab vtab-r t-cat"><svg class="vic"><use href="#wcat"/></svg><span class="vtext">Catalog</span></div>
      <div class="vtab vtab-r t-sea"><svg class="vic"><use href="#wsearch"/></svg><span class="vtext">Search</span></div>
      <div class="vtab vtab-r t-cre"><svg class="vic"><use href="#createf"/></svg><span class="vtext">Create Features</span></div>
    </aside>
  </main>

  <footer class="status"><span class="coords">6079592.715&nbsp; 2272482.918 Feet</span></footer>

  <div class="taskbar">
    <span class="orb"><svg width="40" height="40" viewBox="0 0 40 40"><defs><radialGradient id="og" cx=".5" cy=".35" r=".7"><stop offset="0" stop-color="#8fc8ea"/><stop offset=".6" stop-color="#1f6aa8"/><stop offset="1" stop-color="#0b3358"/></radialGradient></defs><circle cx="20" cy="20" r="18" fill="url(#og)" stroke="#a9d4ea"/><path d="M10 14l9-2v7h-9z" fill="#e8562a"/><path d="M21 12l9-2v9h-9z" fill="#7ab63c"/><path d="M10 21h9v7l-9-2z" fill="#3c9be0"/><path d="M21 21h9v8l-9-1z" fill="#f4c02c"/></svg></span>
    <span class="tk tk-ie"><svg width="36" height="36" viewBox="0 0 36 36"><text x="18" y="27" text-anchor="middle" class="ie-e">e</text><path d="M5 32C2 26 17 5 31 3c4 0 1 7-3 12" fill="none" stroke="#f0c01c" stroke-width="2.500"/></svg></span>
    <span class="tk tk-ex"><svg width="36" height="36" viewBox="0 0 36 36"><path d="M4 5h12l2 3h14v24H4z" fill="#e9d48c" stroke="#a88c3c"/><rect x="7" y="3" width="9" height="4" fill="#4cae3c"/><rect x="17" y="6" width="10" height="4" fill="#c94c3c"/><rect x="21" y="10" width="9" height="4" fill="#3c8fd0"/><path d="M4 13h28v19H4z" fill="#f4e6ac"/><path d="M12 32V21h13v11M10 21h17v3H10z" fill="#d8e4ec" stroke="#8aa4b8"/></svg></span>
    <span class="tk tk-wm"><svg width="36" height="36" viewBox="0 0 36 36"><rect x="8" y="4" width="20" height="28" rx="2" fill="#8fb5d4"/><rect x="5" y="6" width="22" height="28" rx="2" fill="#e8923c" stroke="#9ab8d0" stroke-width="2"/><path d="M11 12v16l13-8z" fill="#fff"/></svg></span>
    <span class="tk tk-box"><svg width="34" height="34" viewBox="0 0 36 36"><circle cx="18" cy="18" r="17" fill="#d9403a"/><path d="M18 18L33 10A17 17 0 0 1 14 35z" fill="#f4c82c"/><path d="M18 18L14 35A17 17 0 0 1 3 10z" fill="#3da84a"/><circle cx="18" cy="18" r="7.500" fill="#4a8fe0" stroke="#fff" stroke-width="2"/></svg></span>
    <span class="tk tk-box tk-act"><svg width="38" height="38" viewBox="0 0 40 40"><ellipse cx="19" cy="19" rx="16" ry="17" fill="#123c58"/><path d="M24 5l9 12-5 9-6-6zM6 20l6-4 4 8-6 7z" fill="#3f8f4a"/><circle cx="17" cy="16" r="9" fill="#b9dcf0" stroke="#0a2c44" stroke-width="2.500"/><path d="M23 23l11 12" stroke="#b07a30" stroke-width="4"/></svg></span>
    <span class="tk tk-sh"><svg width="32" height="36" viewBox="0 0 32 36"><path d="M16 1l14 7v20l-14 7-14-7V8z" fill="#1c6fd8"/><circle cx="16" cy="18" r="10" fill="#fff"/><path d="M12 10l7-1 2 5-5 3 1 5-3 5-3-7-2-4z" fill="#1c6fd8"/><path d="M21 18l3 0-1 6-3 1z" fill="#1c6fd8"/></svg></span>
    <span class="tk tk-box tk-py"><svg width="38" height="38" viewBox="0 0 38 38"><rect x="4" y="2" width="24" height="32" fill="#17428c"/><rect x="7" y="6" width="18" height="24" fill="#0a0f1c"/><path d="M21 10c-6 0-7 2-7 4v3h8v2H11c-3 0-4 3-4 6s2 6 4 6h3v-4c0-3 2-4 4-4h7c2 0 4-2 4-4v-5c0-2-2-4-8-4z" fill="#3a76ad"/><path d="M23 36c6 0 7-2 7-4v-3h-8v-2h11c3 0 3-3 3-6s-1-6-3-6h-4v4c0 3-2 4-4 4h-7c-2 0-4 2-4 4v5c0 2 2 4 9 4z" fill="#f4cc3c"/></svg></span>
    <div class="tray">
      <i class="tup"></i>
      <svg class="ti-flag" width="14" height="18" viewBox="0 0 14 18"><path d="M1 1v16" stroke="#fff" stroke-width="1.500"/><path d="M2 2h6l1 2h4l-2 3-1 1-2-2H2z" fill="#fff"/></svg>
      <svg class="ti-pow" width="14" height="16" viewBox="0 0 14 16"><rect x="1" y="2" width="11" height="12" fill="none" stroke="#ddd" stroke-width="1.500"/><path d="M4 0v5M9 0v5M2 5h9v4l-3 3H5L2 9z" fill="#fff" stroke="#fff"/></svg>
      <svg class="ti-net" width="16" height="16" viewBox="0 0 16 16"><rect x="4.500" y="3.500" width="11" height="8" fill="none" stroke="#eee"/><rect x="0" y="0" width="4" height="6" fill="#eee"/><path d="M7 14h6M10 11v3" stroke="#eee" stroke-width="1.500"/></svg>
      <svg class="ti-vol" width="12" height="14" viewBox="0 0 12 14"><path d="M0 5h3l4-4v12l-4-4H0z" fill="#eee"/><path d="M9 4c1 2 1 4 0 6" fill="none" stroke="#aab"/></svg>
      <div class="clock"><span>7:06 AM</span><span>1/11/2015</span></div>
      <span class="desk"></span>
    </div>
  </div>
</div>
<script src="map.js"></script>
</body>
</html>
```

FILE: styles.css
```css
* { box-sizing: border-box; }
html, body { margin: 0; padding: 0; }
body { width: 1440px; height: 900px; overflow: hidden; background: #f0f0f0; font: 12px/16px "Noto Sans", "Open Sans", sans-serif; letter-spacing: -.35px; color: #111; }
.defs { display: block; height: 0; }
.app { display: flex; flex-direction: column; width: 1440px; height: 900px; }

.titlebar { flex: 0 0 22px; display: flex; align-items: center; padding-left: 1px; border-bottom: 2px solid #d9d9df; background: linear-gradient(90deg, #2c4c66 0, #3b4860 12px, #665a6a 130px, #564c5c 220px, #6a5258 300px, #5a5264 420px, #4c4e66 500px, #4c4e66 1250px, #5d5c70 1300px, #4c4e66 1340px); }
.ticon { margin-right: 2px; }
.ttext { color: #0a0a14; font-size: 13px; letter-spacing: -.3px; margin-top: -1px; }
.wctl { display: flex; margin-left: auto; margin-right: 4px; height: 20px; border: 1px solid #33343f; border-top: 0; border-radius: 0 0 4px 4px; overflow: hidden; }
.wbtn { display: flex; align-items: center; justify-content: center; height: 19px; }
.wmin { width: 28px; background: linear-gradient(#9aa0aa, #7a7e8c 50%, #62646f); border-right: 1px solid #ddd; }
.wmax { width: 27px; background: linear-gradient(#9aa0aa, #7a7e8c 50%, #62646f); border-right: 1px solid #ddd; }
.wclose { width: 46px; background: linear-gradient(#d88878, #c85a48 45%, #b8281c 60%, #c85a48); }
.gmin { width: 10px; height: 4px; margin-top: 6px; background: #eee; border: 1px solid #555; }
.gmax { width: 11px; height: 10px; background: #ddd; border: 1px solid #444; box-shadow: 2px -2px 0 -1px #ddd; }
.gx { color: #fff; font-size: 12px; font-weight: 700; text-shadow: 0 0 1px #333; }

.menubar { flex: 0 0 24px; display: flex; align-items: center; padding: 0 0 0 12px; background: #f5f5f5; font-size: 12px; letter-spacing: -.42px; }
.m { display: block; }
.m-file { width: 34px; } .m-edit { width: 36px; } .m-view { width: 41px; } .m-book { width: 74px; } .m-ins { width: 46px; } .m-sel { width: 64px; } .m-geo { width: 94px; } .m-cus { width: 72px; } .m-win { width: 65px; }

.bars { flex: 0 0 79px; display: flex; flex-direction: column; gap: 2px; padding-top: 2px; background: #f5f5f5; height: 79px; }
.barrow { display: flex; height: 24px; }
.tb { display: flex; align-items: center; height: 24px; background: #eeeeee; margin-left: 2px; border-radius: 2px; }
.tb-edit { margin-left: 3px; }
.grip { width: 5px; height: 16px; margin-left: 3px; background: radial-gradient(circle at 1.500px 1.500px, #9a9a9a 1px, transparent 1.200px) 0 0 / 3px 4px repeat-y; }
.grip-n { width: 4px; }
.b { display: flex; align-items: center; justify-content: center; width: 22px; height: 24px; flex: none; }
.b svg { width: 18px; height: 18px; display: block; }
.off svg { filter: grayscale(1) opacity(.3); }
.on { background: #dcebf8; border: 1px solid #3e9ae6; height: 24px; }
.on-off { background: #dfe6ec; border-color: #b8d0e4; }
.sep { flex: none; width: 6px; height: 18px; background: linear-gradient(#bdbdbd, #bdbdbd) 2px 0 / 1px 100% no-repeat; }
.sep-w { width: 7px; } .sep-n { width: 5px; } .sep-c { width: 7px; background-position: 3px 0; }
.drop { flex: none; width: 10px; height: 24px; background: linear-gradient(45deg, transparent 50%, #111 50%) 2px 11px / 3px 3px no-repeat, linear-gradient(-45deg, transparent 50%, #111 50%) 5px 11px / 3px 3px no-repeat; }
.drop-w { width: 12px; }
.off-d { opacity: .3; width: 11px; }
.more { flex: none; width: 11px; height: 24px; margin-left: 2px; border-radius: 0 2px 2px 0; background: linear-gradient(#f2f2f2, #bbb 55%, #777); position: relative; }
.tb-edit .more { margin-left: 1px; }
.more::after { content: ""; position: absolute; left: 3px; bottom: 5px; width: 0; height: 0; border: 3px solid transparent; border-top-color: #000; border-bottom: 0; box-shadow: 0 -2px 0 #000; }
.combo { flex: none; display: flex; align-items: center; justify-content: space-between; width: 146px; height: 22px; margin-left: 2px; padding: 0 4px 0 2px; background: #fff; border: 1px solid #c4c4c4; border-radius: 2px; }
.scale { letter-spacing: -.8px; }
.carr { width: 0; height: 0; border: 4px solid transparent; border-top-color: #000; border-bottom: 0; }
.carr-off { border-top-color: #a0a0a0; margin-right: 1px; }
.combo-z { width: 59px; margin-left: 1px; padding-left: 2px; }
.zval { width: 37px; height: 14px; line-height: 14px; background: #3a90e8; color: #7ab6f2; }
.editor { display: flex; align-items: center; margin-left: 4px; width: 42px; font-size: 12px; flex: none; }
.mini { width: 0; height: 0; margin-left: 3px; border: 3px solid transparent; border-top-color: #000; border-bottom: 0; }

.work { flex: 0 0 713px; display: flex; height: 713px; }
.rail-l { flex: 0 0 22px; padding-top: 3px; }
.vtab { display: flex; flex-direction: column; align-items: center; border: 1px solid #a9a9a9; background: #f2f2f2; overflow: hidden; }
.vtab-l { width: 20px; height: 69px; border-left: 0; border-radius: 0 0 5px 0; gap: 2px; padding-top: 2px; }
.vic { width: 17px; height: 17px; flex: none; }
.vtext { writing-mode: vertical-rl; font-size: 12px; letter-spacing: .2px; line-height: 14px; color: #555; }
.toc { flex: 0 0 403px; display: flex; flex-direction: column; }
.toc-head { flex: 0 0 20px; display: flex; align-items: center; padding: 0 4px; background: linear-gradient(90deg, #a5bedb, #b3cde9); }
.toc-title { color: #10182a; flex: 1; margin-top: 1px; }
.pin { margin-right: 6px; }
.toc-tools { flex: 0 0 26px; display: flex; align-items: center; padding-left: 4px; background: linear-gradient(#fafafa, #efefef); }
.toc-tools .b { height: 22px; }
.tree-box { flex: 0 0 667px; display: flex; height: 667px; background: #fff; border: 1px solid #8c8c8c; }
.tree { flex: 1; overflow: hidden; padding-top: 1px; }
.row { display: flex; align-items: center; height: 18px; padding-left: 59px; white-space: nowrap; }
.sw { flex: none; width: 15px; height: 12px; margin-right: 3px; border: 1px solid #707070; }
.row-top { padding-left: 8px; }
.row-sub { padding-left: 28px; }
.row-field { padding-left: 82px; }
.exp { flex: none; width: 9px; height: 9px; margin-right: 7px; border: 1px solid #8f9ba8; background: linear-gradient(#fff, #dde); position: relative; }
.exp::after { content: ""; position: absolute; left: 1px; top: 3px; width: 5px; height: 1px; background: #333; }
.lyr { flex: none; margin-right: 3px; }
.lname { font-weight: 700; }
.chk { flex: none; display: flex; width: 11px; height: 11px; margin-right: 6px; border: 1px solid #000; background: #fff; overflow: hidden; }
.chk svg { flex: none; margin: -1px; }
.sel { display: block; height: 18px; line-height: 16px; padding: 0 1px; background: #3399ff; color: #fff; border: 1px dotted #6b3a00; letter-spacing: -.55px; }
.vscroll { flex: 0 0 16px; display: flex; flex-direction: column; background: #f4f4f4; }
.vscroll-t { flex: 0 0 15px; margin-right: 3px; }
.sarrow { flex: 0 0 19px; display: flex; align-items: center; justify-content: center; }
.sarrow::after { content: ""; width: 0; height: 0; border: 4px solid transparent; }
.up::after { border-bottom-color: #333; border-top: 0; }
.down::after { border-top-color: #333; border-bottom: 0; }
.thumb { flex: 1; display: flex; align-items: center; justify-content: center; border: 1px solid #b4b4b4; border-radius: 2px; background: linear-gradient(90deg, #e4e4e4, #f4f4f4 30%, #d0d0d0 60%, #c4c4c4); margin-bottom: 33px; }
.hatch { width: 7px; height: 7px; background: repeating-linear-gradient(#666 0 1px, #eee 1px 2px); }

.view { flex: 0 0 987px; margin-left: 5px; display: flex; flex-direction: column; }
.view-top { flex: 0 0 697px; display: flex; height: 697px; border-top: 1px solid #a8a8a8; border-left: 1px solid #8c8c8c; background: #fff; }
.map { flex: 0 0 969px; width: 969px; height: 696px; display: block; background: #fff; border-right: 1px solid #aaa; }
.vscroll-m { flex: 0 0 17px; }
.vscroll-m .thumb { margin: 0 2px; flex: 1; }
.vscroll-m .sarrow { flex: 0 0 18px; }
.view-bot { flex: 0 0 16px; display: flex; align-items: center; background: #f2f2f2; }
.vb { flex: none; display: flex; align-items: center; justify-content: center; width: 15px; height: 16px; }
.vb svg { width: 13px; height: 13px; }
.vb-on { margin-left: 2px; background: #e0e0e0; border: 1px solid #777; border-radius: 2px; margin-right: 2px; }
.vsep { flex: none; width: 1px; height: 14px; margin: 0 5px 0 4px; background: #999; }
.vb-p { margin-left: 2px; margin-right: 1px; }
.harrow { flex: none; display: flex; justify-content: center; align-items: center; width: 18px; height: 16px; background: #e6e6e6; }
.harrow::after { content: ""; width: 0; height: 0; border: 4px solid transparent; }
.left::after { border-right-color: #333; border-left: 0; }
.right { background: transparent; }
.right::after { border-left-color: #333; border-right: 0; }
.hthumb { flex: 0 0 855px; display: flex; justify-content: center; align-items: center; height: 15px; border: 1px solid #bbb; border-radius: 2px; background: linear-gradient(#e4e4e4, #f4f4f4 30%, #d0d0d0 60%, #c4c4c4); }
.hgrip { width: 7px; height: 7px; background: repeating-linear-gradient(90deg, #666 0 1px, #eee 1px 2px); }

.rail-r { flex: 0 0 19px; margin-left: 4px; display: flex; flex-direction: column; padding-top: 3px; }
.vtab-r { width: 19px; border-right: 0; border-radius: 0 0 0 5px; padding-top: 2px; gap: 2px; }
.t-id { height: 67px; margin-bottom: 13px; }
.t-cat { height: 72px; }
.t-sea { height: 67px; margin-bottom: 13px; }
.t-cre { height: 118px; }

.status { flex: 0 0 22px; display: flex; align-items: center; padding: 3px 0 0 1187px; background: #f0f0f0; font-size: 12px; }
.coords { white-space: nowrap; letter-spacing: -.7px; }

.taskbar { flex: 0 0 40px; display: flex; align-items: center; height: 40px; border-top: 1px solid #8a8a94; background: linear-gradient(90deg, #0a0a14 0, #0d0c1a 500px, #141736 1000px, #1a2148 1440px); color: #fff; }
.orb { flex: none; display: flex; margin: 0 0 0 7px; width: 40px; }
.tk { flex: none; display: flex; align-items: center; justify-content: center; height: 39px; }
.tk-ie { width: 36px; margin-left: 25px; }
.tk-ex { width: 36px; margin-left: 24px; }
.tk-wm { width: 36px; margin-left: 24px; }
.tk-box { width: 58px; margin-left: 0; border: 1px solid #777; border-radius: 3px; background: linear-gradient(#3e3e4a, #26262e 50%, #1c1c24); }
.tk-wm + .tk-box { margin-left: 18px; }
.tk-act { margin-left: 4px; background: linear-gradient(#7c7f88, #5c5f68 50%, #494c54); border-color: #bbb; }
.tk-sh { width: 34px; margin-left: 16px; }
.tk-py { width: 53px; margin-left: 16px; }
.ie-e { font: 700 30px/1 "Liberation Sans", sans-serif; fill: #28a8e0; letter-spacing: 0; }
.tray { flex: 1; display: flex; align-items: center; height: 39px; color: #fff; }
.tup { margin-left: auto; width: 0; height: 0; border: 4px solid transparent; border-bottom-color: #eee; border-top: 0; margin-right: 15px; }
.ti-flag { margin-right: 10px; }
.ti-pow { margin-right: 10px; }
.ti-net { margin-right: 13px; }
.clock { display: flex; flex-direction: column; align-items: flex-end; width: 54px; margin-left: 18px; line-height: 17px; font-size: 12px; text-align: right; }
.clock span:first-child { margin-right: 5px; }
.desk { width: 14px; height: 39px; margin-left: 10px; border: 1px solid #555; background: linear-gradient(#3c3f60, #20233e); }

.c01 { background: #a5c82c; } .c02 { background: #3c9fc8; } .c03 { background: #35b87a; } .c04 { background: #c1282d; }
.c05 { background: #c2942e; } .c06 { background: #249a38; } .c07 { background: #3a2cb4; } .c08 { background: #7f9a24; }
.c09 { background: #2a4aa8; } .c10 { background: #c82a98; } .c11 { background: #8838c8; } .c12 { background: #3a80c0; }
.c13 { background: #a83a60; } .c14 { background: #7a30a8; } .c15 { background: #c03088; } .c16 { background: #30b858; }
.c17 { background: #38b49c; } .c18 { background: #a04080; } .c19 { background: #a0a840; } .c20 { background: #62c74f; }
.c21 { background: #c030c8; } .c22 { background: #c85038; } .c23 { background: #6fa53d; } .c24 { background: #4068c0; }
.c25 { background: #a08840; } .c26 { background: #a02058; } .c27 { background: #a040a8; } .c28 { background: #48acbc; }
.c29 { background: #30c030; } .c30 { background: #2030a0; } .c31 { background: #c0a830; } .c32 { background: #5840b0; }
.c33 { background: #a83038; } .c34 { background: #a87040; }
```

FILE: map.js
```js
// Fine land-use parcels of the map: seeded, so every run draws the same county.
(function () {
  var NS = "http://www.w3.org/2000/svg";
  var seed = 1234567;
  function rnd() {
    seed = (seed * 1664525 + 1013904223) >>> 0;
    return ((seed >>> 8) & 0xffff) / 65536;
  }
  var C = { g: "#707070", G: "#62c74f", O: "#6fa53d", y: "#c8a82a", n: "#2530a0", c: "#3cb0b8", m: "#b03090", p: "#8838c8", r: "#c1282d", l: "#a5c82c", a: "#a0a040", d: "#37d22e", b: "#4068c0", h: "#a83a60", B: "#b07f3c" };
  function inside(P, x, y) {
    var hit = false;
    for (var i = 0, j = P.length - 2; i < P.length; j = i, i += 2) {
      if ((P[i + 1] > y) !== (P[j + 1] > y) && x < (P[j] - P[i]) * (y - P[i + 1]) / (P[j + 1] - P[i + 1]) + P[i]) hit = !hit;
    }
    return hit;
  }
  function bbox(P) {
    var b = [1e9, 1e9, -1e9, -1e9];
    for (var i = 0; i < P.length; i += 2) {
      b[0] = Math.min(b[0], P[i]); b[1] = Math.min(b[1], P[i + 1]);
      b[2] = Math.max(b[2], P[i]); b[3] = Math.max(b[3], P[i + 1]);
    }
    return b;
  }
  function add(parent, d, attrs) {
    var el = document.createElementNS(NS, "path");
    el.setAttribute("d", d);
    for (var k in attrs) el.setAttribute(k, attrs[k]);
    parent.appendChild(el);
  }
  // polygon (zoomed map units, 3 to a pixel), base colour, palette, parcels per 1000 square units
  var regions = [
    [[115,40,265,40,280,100,100,110,70,95], "#76885f", "ggggGOmcd", 10],
    [[30,150,70,100,100,110,80,170,30,190,60,210,115,265,100,270], "#76885f", "gggaOdG", 7],
    [[130,180,370,180,370,345,260,350,215,340,140,290], "#76885f", "ggggggGGOOyync", 11],
    [[300,60,620,70,625,130,560,160,540,240,420,240,380,170,330,110], "#76885f", "ggggGOOaG", 9],
    [[385,170,540,170,540,320,450,320,420,240], "#76885f", "gggggGGOOyyal", 12],
    [[450,320,540,320,530,355,600,385,700,340,700,480,600,490,490,500,460,480], "#76885f", "ggggGGOOnnyd", 11],
    [[610,225,690,300,700,340,600,300], "#6f9248", "ggdO", 5],
    [[570,410,650,420,710,445,710,520,640,520,570,470], "#2530a0", "gggyyn", 8],
    [[490,510,590,480,640,510,710,510,710,620,620,625,520,595], "#c8a82a", "gggnnly", 9],
    [[710,480,790,470,860,490,900,515,925,520,890,580,820,610,760,610,710,570], "#c8a82a", "ggnhy", 4],
    [[625,100,800,100,790,150,840,160,830,205,625,215], "#76885f", "gggnhG", 10],
    [[795,50,1010,60,1040,130,1000,190,880,160,860,130,795,135], "#62c74f", "gggggdhyO", 10],
    [[1000,120,1200,210,1350,270,1350,300,1140,290,1000,190], "#62c74f", "gggOy", 4],
    [[1040,135,1110,170,1130,200,1060,180], "#c8a82a", "gg", 4],
    [[970,400,1060,400,1060,480,970,480], "#62c74f", "ggyB", 2],
    [[1130,400,1350,400,1350,530,1305,540,1320,640,1280,640,1230,530,1135,480], "#a5c82c", "ggggOhyl", 9],
    [[1310,530,1350,525,1350,640,1310,640], "#4068c0", "b", 1],
    [[640,600,720,590,725,640,640,640], "#6fa53d", "ggy", 8]
  ];
  var noise = document.getElementById("noise");
  regions.forEach(function (r) {
    var P = r[0], b = bbox(P), out = {}, d = "M" + P[0] + " " + P[1] + "L" + P.slice(2).join(" ") + "z";
    add(noise, d, { fill: r[1] });
    var n = Math.round((b[2] - b[0]) * (b[3] - b[1]) / 1000 * r[3]);
    for (var i = 0; i < n; i++) {
      var x = b[0] + Math.floor(rnd() * (b[2] - b[0]) / 3) * 3;
      var y = b[1] + Math.floor(rnd() * (b[3] - b[1]) / 3) * 3;
      if (!inside(P, x, y)) continue;
      var w = 3 * (1 + Math.floor(rnd() * 4)), h = 3 * (1 + Math.floor(rnd() * 2));
      if (rnd() < .4) { var t = w; w = h; h = t; }
      var c = r[2].charAt(Math.floor(rnd() * r[2].length));
      out[c] = (out[c] || "") + "M" + x + " " + y + "h" + w + "v" + h + "h-" + w + "z";
    }
    for (var key in out) add(noise, out[key], { fill: C[key] });
  });
  var grids = [
    [[1060,175,1350,260,1350,425,1200,420,1150,320,1060,250], .62],
    [[880,395,1010,395,1010,470,880,470], .4],
    [[1130,470,1240,470,1290,560,1130,565], .62],
    [[1350,255,1450,255,1450,345,1350,345], .6],
    [[1350,355,1400,355,1400,425,1350,425], .55],
    [[1490,427,1600,427,1600,555,1490,555], .7],
    [[1646,387,1732,387,1732,527,1646,527], .72],
    [[1520,545,1620,545,1620,625,1520,625], .5]
  ];
  var cells = document.getElementById("cells"), cd = "";
  grids.forEach(function (g) {
    var b = bbox(g[0]);
    for (var y = b[1]; y < b[3]; y += 24) {
      for (var x = b[0]; x < b[2]; x += 27) {
        if (inside(g[0], x + 12, y + 12) && rnd() < g[1]) cd += "M" + x + " " + y + "h27v24h-27z";
      }
    }
  });
  add(cells, cd, {});
})();
```
